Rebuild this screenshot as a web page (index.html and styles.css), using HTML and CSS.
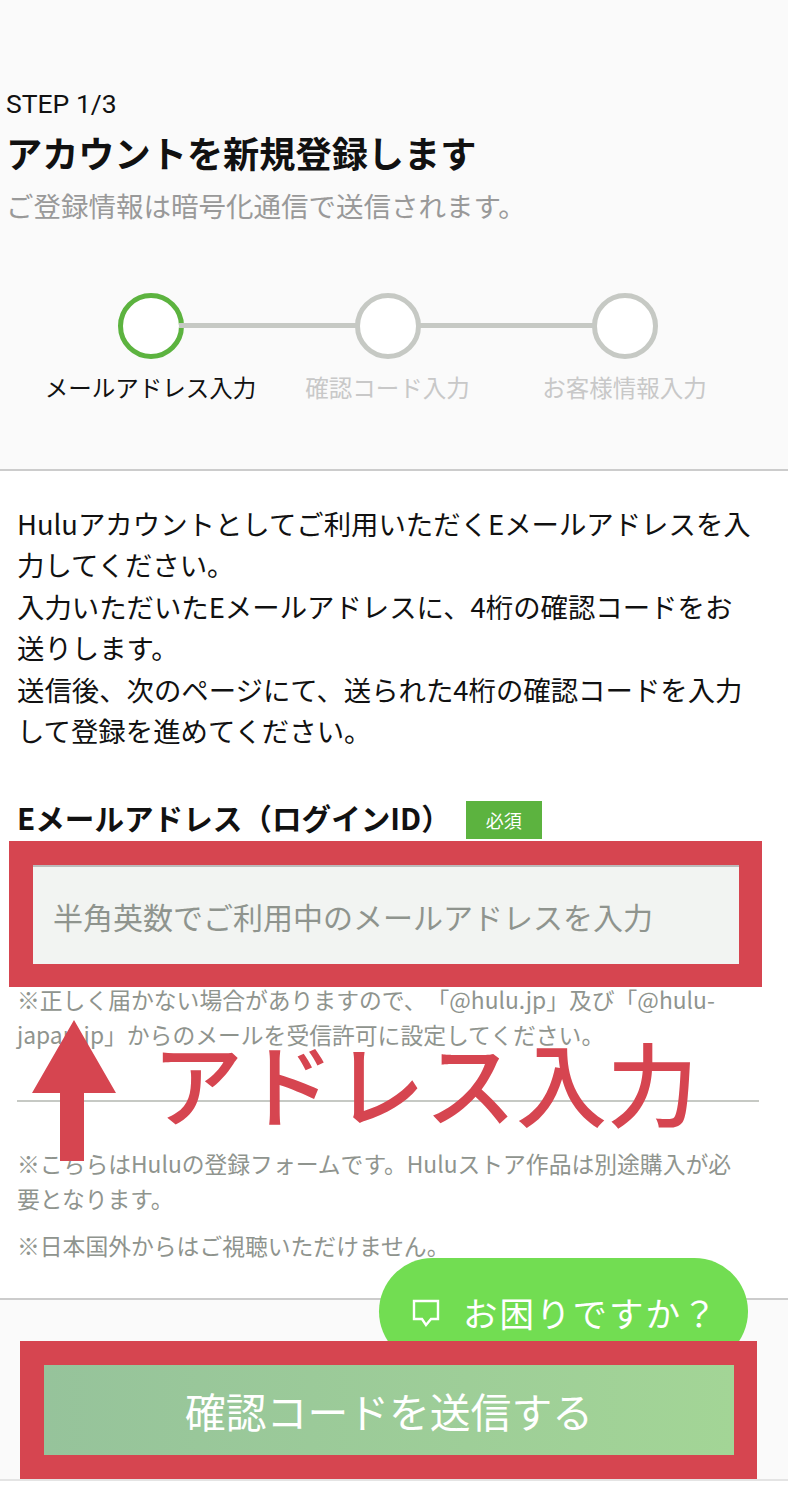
FILE: index.html

```html
<!DOCTYPE html>
<html lang="ja">
<head>
  <meta charset="UTF-8">
  <title>アカウント新規登録</title>
  <link rel="stylesheet" href="styles.css">
</head>
<body>
  <div class="page">
    <header class="head">
      <div class="step-no">STEP 1/3</div>
      <h1 class="title">アカウントを新規登録します</h1>
      <p class="lead">ご登録情報は暗号化通信で送信されます。</p>
      <div class="stepper">
        <div class="step active"><span class="dot"></span><span class="step-label">メールアドレス入力</span></div>
        <div class="step"><span class="dot"></span><span class="step-label">確認コード入力</span></div>
        <div class="step"><span class="dot"></span><span class="step-label">お客様情報入力</span></div>
      </div>
    </header>

    <main class="content">
      <p class="intro">Huluアカウントとしてご利用いただくEメールアドレスを入力してください。<br>入力いただいたEメールアドレスに、4桁の確認コードをお送りします。<br>送信後、次のページにて、送られた4桁の確認コードを入力して登録を進めてください。</p>

      <div class="field-head">
        <span class="field-label">Eメールアドレス（ログインID）</span>
        <span class="badge">必須</span>
      </div>
      <input class="email" type="text" placeholder="半角英数でご利用中のメールアドレスを入力">
      <p class="note first">※正しく届かない場合がありますので、「@hulu.jp」及び「@hulu-japan.jp」からのメールを受信許可に設定してください。</p>
      <hr class="rule">
      <p class="note">※こちらはHuluの登録フォームです。Huluストア作品は別途購入が必要となります。</p>
      <p class="note last">※日本国外からはご視聴いただけません。</p>
    </main>

    <footer class="foot">
      <button class="send" type="button">確認コードを送信する</button>
    </footer>

    <div class="help">
      <svg class="help-icon" width="30" height="30" viewBox="0 0 30 30" fill="none" stroke="#fff" stroke-width="2.4">
        <path d="M3 4h24v18h-7l-5 6-4-6H3z"/>
      </svg>
      <span class="help-text">お困りですか？</span>
    </div>

    <!-- annotations on top of the screenshot -->
    <div class="frame frame-input"></div>
    <div class="frame frame-send"></div>
    <svg class="arrow" width="84" height="142" viewBox="0 0 84 142">
      <path d="M42 0L84 73H52V141H28V73H0z" fill="#d64550"/>
    </svg>
    <div class="callout">アドレス入力</div>
  </div>
</body>
</html>
```

FILE: styles.css

```css
html, body {
  margin: 0;
  padding: 0;
  background: #fff;
}
body {
  font-family: "Noto Sans CJK JP", "Noto Sans", sans-serif;
  color: #111;
  text-spacing-trim: space-all;
}
.page {
  position: relative;
  width: 788px;
  height: 1502px;
  overflow: hidden;
}

.head {
  height: 471px;
  box-sizing: border-box;
  padding: 86px 0 0 6px;
  background: #fafafa;
  border-bottom: 2px solid #ccc;
}
.step-no {
  font-family: Roboto, sans-serif;
  font-size: 26.5px;
  line-height: 36px;
}
.title {
  margin: 5px 0 0;
  font-size: 36.2px;
  line-height: 50px;
  font-weight: 700;
}
.lead {
  margin: 8px 0 0;
  font-size: 27.5px;
  line-height: 40px;
  color: #999;
}
.stepper {
  display: flex;
  margin: 68px 0 0 26px;
}
.step {
  position: relative;
  display: flex;
  flex-direction: column;
  align-items: center;
  width: 237px;
}
.step + .step::before {
  content: "";
  position: absolute;
  top: 30px;
  left: -90px;
  width: 180px;
  height: 5px;
  background: #c6c9c4;
}
.dot {
  width: 66px;
  height: 66px;
  box-sizing: border-box;
  border: 5px solid #c6c9c4;
  border-radius: 50%;
  background: #fff;
}
.active .dot {
  border-color: #5cb33f;
}
.step-label {
  margin-top: 10px;
  font-size: 23.5px;
  line-height: 36px;
  color: #c8c8c8;
  white-space: nowrap;
}
.active .step-label {
  color: #111;
}

.content {
  height: 829px;
  box-sizing: border-box;
  padding: 32px 29px 0 17px;
  border-bottom: 2px solid #ccc;
}
.intro {
  margin: 0;
  font-size: 27.4px;
  line-height: 41.4px;
}
.field-head {
  display: flex;
  align-items: flex-start;
  margin-top: 48px;
}
.field-label {
  font-size: 29.6px;
  line-height: 38px;
  font-weight: 700;
}
.badge {
  width: 76px;
  height: 38px;
  margin: 2px 0 0 15px;
  background: #5cb33f;
  color: #fff;
  font-size: 18px;
  line-height: 38px;
  text-align: center;
}
.email {
  display: block;
  width: 706px;
  height: 99px;
  box-sizing: border-box;
  margin: 26px 0 0 16px;
  padding: 0 20px;
  border: 0;
  border-top: 2px solid #bbb;
  background: #f2f4f2;
  font-family: inherit;
  font-size: 30px;
}
.email::placeholder {
  color: #8f948e;
  opacity: 1;
}
.note {
  margin: 0;
  padding-right: 8px;
  font-size: 22.8px;
  line-height: 35px;
  color: #8f948e;
}
.note.first {
  margin-top: 18px;
}
.note.last {
  margin-top: 12px;
}
.rule {
  height: 2px;
  margin: 48px 0 44px;
  border: 0;
  background: #c6c9c4;
}

.foot {
  height: 181px;
  box-sizing: border-box;
  padding: 65px 0 0 44px;
  background: #fafafa;
  border-bottom: 2px solid #e4e4e4;
}
.send {
  display: block;
  width: 690px;
  height: 90px;
  padding: 0;
  border: 0;
  background: linear-gradient(90deg, #96c39b, #a3d596);
  color: #fff;
  font-family: inherit;
  font-size: 40.8px;
}

.help {
  position: absolute;
  left: 379px;
  top: 1258px;
  display: flex;
  align-items: center;
  width: 369px;
  height: 107px;
  box-sizing: border-box;
  padding-left: 32px;
  border-radius: 54px;
  background: #72dd52;
  color: #fff;
  font-size: 34.5px;
}
.help-icon {
  margin-right: 22px;
}
.help-text {
  letter-spacing: 2px;
  white-space: nowrap;
}

.frame {
  position: absolute;
  box-sizing: border-box;
  border: 24px solid #d64550;
}
.frame-input {
  left: 9px;
  top: 841px;
  width: 753px;
  height: 146px;
  border-width: 24px 23px 23px 24px;
}
.frame-send {
  left: 20px;
  top: 1341px;
  width: 737px;
  height: 138px;
  border-right-width: 23px;
}
.arrow {
  position: absolute;
  left: 32px;
  top: 1020px;
}
.callout {
  position: absolute;
  left: 152px;
  top: 1052px;
  font-size: 91px;
  font-weight: 500;
  line-height: 56px;
  color: #d64550;
  white-space: nowrap;
}
```
